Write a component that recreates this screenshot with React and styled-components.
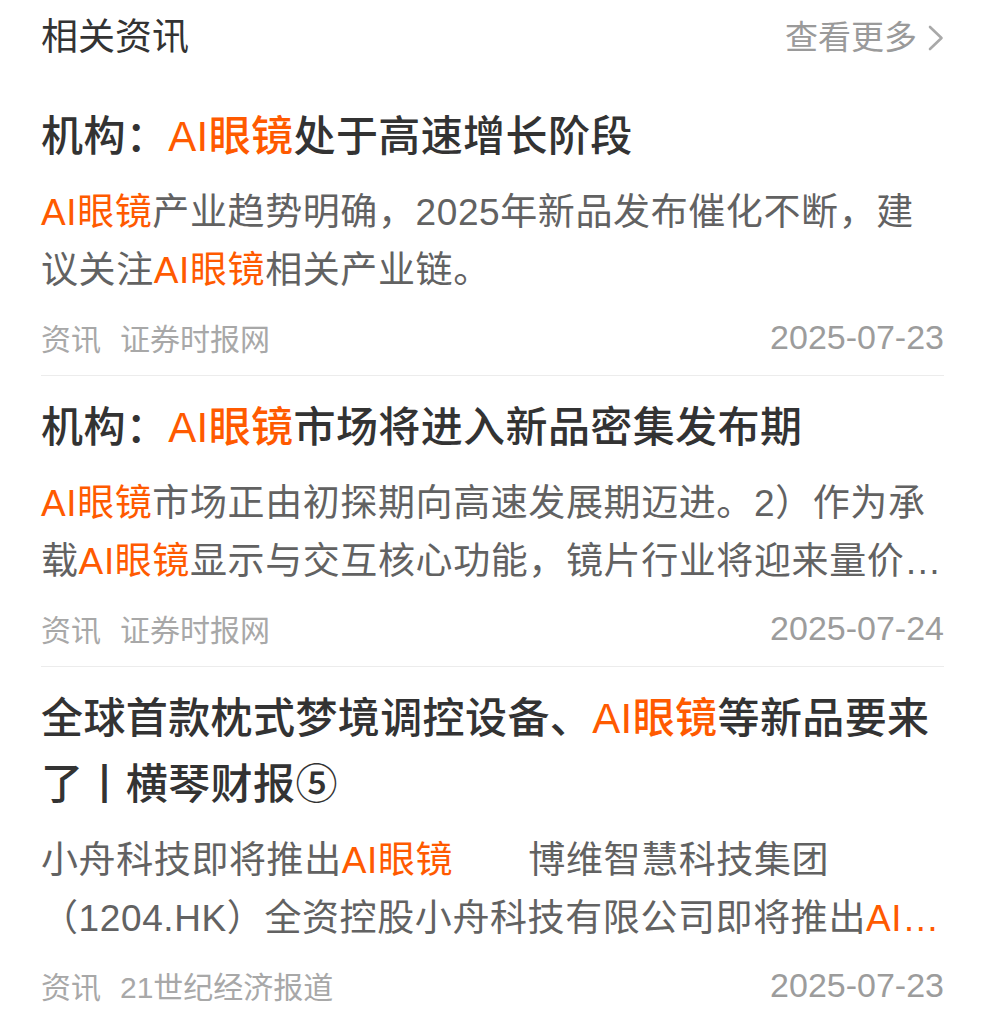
import React from 'react';
import styled, { createGlobalStyle } from 'styled-components';

const colors = {
    title: '#333333',
    body: '#626262',
    meta: '#a8a8a8',
    date: '#9c9c9c',
    accent: '#ff5a00',
    line: '#ececec',
};

const GlobalStyle = createGlobalStyle`
    body {
        margin: 0;
        background: #ffffff;
        font-family: "Liberation Sans", "Noto Sans CJK SC", sans-serif;
    }
`;

const Section = styled.section`
    padding: 0 41px;
    background: #ffffff;
`;

const Header = styled.div`
    display: flex;
    align-items: center;
    justify-content: space-between;
    height: 50px;
    padding-top: 13px;
    margin-bottom: 41px;
`;

const HeaderTitle = styled.h2`
    margin: 0;
    font-size: 37px;
    font-weight: 400;
    line-height: 50px;
    color: ${colors.title};
`;

const More = styled.a`
    display: flex;
    align-items: center;
    gap: 11px;
    font-size: 33px;
    line-height: 50px;
    color: #9a9a9a;
    text-decoration: none;
`;

const Item = styled.article`
    padding: ${props => props.first ? '0' : '19px'} 0 18px;
    border-bottom: ${props => props.last ? 'none' : `1px solid ${colors.line}`};
`;

const Title = styled.h3`
    margin: 0;
    font-size: 42px;
    font-weight: 500;
    line-height: 66px;
    letter-spacing: 0.4px;
    color: ${colors.title};
    white-space: nowrap;
`;

const Summary = styled.p`
    margin: 14px 0 0;
    font-size: 37px;
    line-height: 58px;
    letter-spacing: 0.6px;
    color: ${colors.body};
    white-space: nowrap;
`;

const Hit = styled.span`
    color: ${colors.accent};
`;

const Meta = styled.div`
    display: flex;
    align-items: center;
    justify-content: space-between;
    margin-top: 17px;
    height: 40px;
`;

const Source = styled.div`
    display: flex;
    gap: 19px;
    font-size: 30px;
    color: ${colors.meta};
`;

const Date = styled.span`
    font-size: 34px;
    color: ${colors.date};
`;

const Chevron = () => (
    <svg width="16" height="26" viewBox="0 0 16 26" fill="none">
        <path d="M2 2 L13.5 13 L2 24" stroke="#a9a9a9" strokeWidth="2.6" strokeLinecap="round" strokeLinejoin="round" />
    </svg>
);

const news = [
    {
        title: [['机构：'], ['AI眼镜', true], ['处于高速增长阶段']],
        summary: [
            [['AI眼镜', true], ['产业趋势明确，2025年新品发布催化不断，建']],
            [['议关注'], ['AI眼镜', true], ['相关产业链。']],
        ],
        source: '证券时报网',
        date: '2025-07-23',
    },
    {
        title: [['机构：'], ['AI眼镜', true], ['市场将进入新品密集发布期']],
        summary: [
            [['AI眼镜', true], ['市场正由初探期向高速发展期迈进。2）作为承']],
            [['载'], ['AI眼镜', true], ['显示与交互核心功能，镜片行业将迎来量价…']],
        ],
        source: '证券时报网',
        date: '2025-07-24',
    },
    {
        title: [['全球首款枕式梦境调控设备、'], ['AI眼镜', true], ['等新品要来'], ['\n'], ['了丨横琴财报⑤']],
        summary: [
            [['小舟科技即将推出'], ['AI眼镜', true], ['\u3000\u3000博维智慧科技集团']],
            [['（1204.HK）全资控股小舟科技有限公司即将推出'], ['AI…', true]],
        ],
        source: '21世纪经济报道',
        date: '2025-07-23',
    },
];

const renderParts = (parts) => parts.map(([text, hit], i) => {
    if (text === '\n') return <br key={i} />;
    return hit ? <Hit key={i}>{text}</Hit> : <React.Fragment key={i}>{text}</React.Fragment>;
});

const App = () => {
    return (
        <Section>
            <GlobalStyle />
            <Header>
                <HeaderTitle>相关资讯</HeaderTitle>
                <More href="#">查看更多<Chevron /></More>
            </Header>
            {news.map((item, index) => (
                <Item key={index} first={index === 0} last={index === news.length - 1}>
                    <Title>{renderParts(item.title)}</Title>
                    <Summary>
                        {item.summary.map((line, i) => (
                            <React.Fragment key={i}>
                                {i > 0 && <br />}
                                {renderParts(line)}
                            </React.Fragment>
                        ))}
                    </Summary>
                    <Meta>
                        <Source>
                            <span>资讯</span>
                            <span>{item.source}</span>
                        </Source>
                        <Date>{item.date}</Date>
                    </Meta>
                </Item>
            ))}
        </Section>
    );
};

export default App;
